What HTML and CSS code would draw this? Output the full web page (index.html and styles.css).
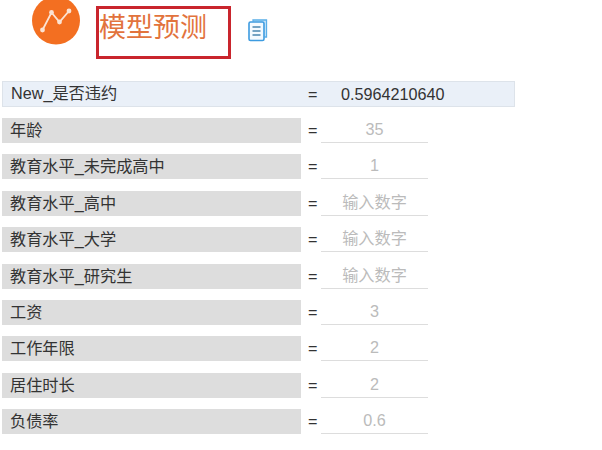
FILE: index.html
```html
<!DOCTYPE html>
<html>

<head>
  <meta charset="UTF-8">
  <title>模型预测</title>
  <link rel="stylesheet" href="styles.css">
</head>

<body>
  <div class="header">
    <svg class="logo" width="48" height="45" viewBox="0 0 48 45">
      <circle cx="24" cy="20.5" r="24" fill="#f36f21" />
      <polyline points="10.5,30 19.5,12.5 27.5,22 37,11" fill="none" stroke="#fbe3d3" stroke-width="1.8" />
      <circle cx="10.5" cy="30" r="2.4" fill="#fbe3d3" />
      <circle cx="19.5" cy="12.5" r="2.4" fill="#fbe3d3" />
      <circle cx="27.5" cy="22" r="2.4" fill="#fbe3d3" />
      <circle cx="37" cy="11" r="2.4" fill="#fbe3d3" />
    </svg>
    <div class="title-box">模型预测</div>
    <svg class="doc-icon" width="20" height="23" viewBox="0 0 20 23">
      <path d="M5 2.5 V1 H18.5 V18 H16.5" fill="#cfe8fa" stroke="#5aaee8" stroke-width="1.3" />
      <rect x="1" y="3" width="15" height="18.5" rx="1.5" fill="#f4faff" stroke="#3d9be0" stroke-width="1.6" />
      <path d="M4.5 8 H12.5 M4.5 12 H12.5 M4.5 16 H12.5" stroke="#4a86b0" stroke-width="1.3" />
    </svg>
  </div>

  <div class="result">
    <div class="result-name">New_是否违约</div>
    <div class="eq">=</div>
    <div class="result-value">0.5964210640</div>
  </div>

  <div class="fields">
    <div class="field">
      <div class="name">年龄</div>
      <div class="eq">=</div>
      <div class="val">35</div>
    </div>
    <div class="field">
      <div class="name">教育水平_未完成高中</div>
      <div class="eq">=</div>
      <div class="val">1</div>
    </div>
    <div class="field">
      <div class="name">教育水平_高中</div>
      <div class="eq">=</div>
      <div class="val">输入数字</div>
    </div>
    <div class="field">
      <div class="name">教育水平_大学</div>
      <div class="eq">=</div>
      <div class="val">输入数字</div>
    </div>
    <div class="field">
      <div class="name">教育水平_研究生</div>
      <div class="eq">=</div>
      <div class="val">输入数字</div>
    </div>
    <div class="field">
      <div class="name">工资</div>
      <div class="eq">=</div>
      <div class="val">3</div>
    </div>
    <div class="field">
      <div class="name">工作年限</div>
      <div class="eq">=</div>
      <div class="val">2</div>
    </div>
    <div class="field">
      <div class="name">居住时长</div>
      <div class="eq">=</div>
      <div class="val">2</div>
    </div>
    <div class="field">
      <div class="name">负债率</div>
      <div class="eq">=</div>
      <div class="val">0.6</div>
    </div>
  </div>
</body>

</html>
```

FILE: styles.css
```css
body {
  margin: 0;
  font-family: "Liberation Sans", "Noto Sans CJK SC", sans-serif;
  font-size: 16.2px;
  color: #333;
  background: #fff;
}

.header {
  display: flex;
  align-items: flex-start;
  height: 81px;
  padding-left: 32px;
}

.logo {
  flex: none;
}

.title-box {
  box-sizing: border-box;
  width: 135px;
  height: 53px;
  margin: 6px 0 0 16px;
  padding-top: 2px;
  border: 3px solid #c9252d;
  font-size: 27px;
  line-height: 34px;
  color: #e2733d;
}

.doc-icon {
  margin: 19px 0 0 17px;
}

.result {
  box-sizing: border-box;
  display: flex;
  align-items: center;
  width: 513px;
  height: 26px;
  margin: 0 0 11px 2px;
  padding-left: 8px;
  background: #eaf0f8;
  border: 1px solid #dde3ea;
  line-height: 22px;
}

.result-name {
  width: 297px;
  padding-bottom: 2px;
}

.result-value {
  margin-left: 24px;
  padding-bottom: 1px;
}

.eq {
  width: 9px;
  text-align: center;
  flex: none;
}

.fields {
  display: flex;
  flex-direction: column;
  gap: 11.4px;
  margin-left: 2px;
}

.field {
  display: flex;
  align-items: stretch;
  height: 25px;
}

.name {
  box-sizing: border-box;
  width: 299px;
  padding-left: 8px;
  line-height: 25px;
  background: #ddd;
}

.field .eq {
  margin-left: 7px;
  line-height: 25px;
}

.val {
  box-sizing: border-box;
  width: 107px;
  margin-left: 4px;
  line-height: 23px;
  text-align: center;
  color: #bbb;
  border-bottom: 1px solid #ddd;
}
```
